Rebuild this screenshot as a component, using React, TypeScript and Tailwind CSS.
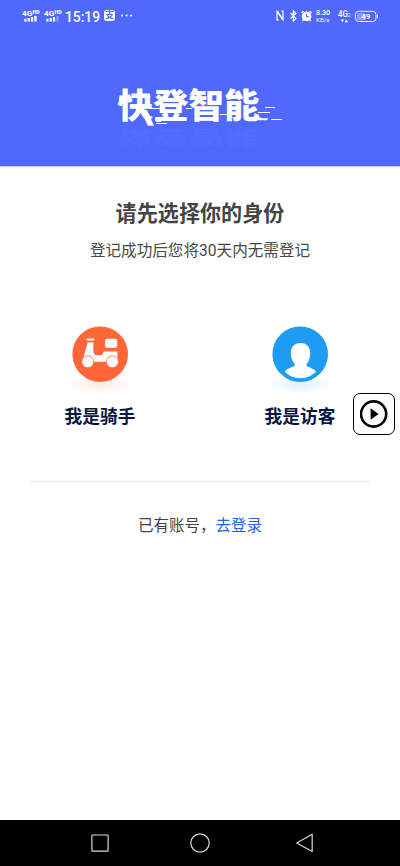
import React from "react";

const SignalIcon: React.FC<{ weak?: boolean }> = ({ weak }) => (
  <svg className="block w-[18px] h-3" viewBox="0 0 18 12" fill="#fff">
    <text x="0" y="5.6" fontSize="7.4" fontWeight="700" textLength="10.3" lengthAdjust="spacingAndGlyphs">
      4G
    </text>
    <text x="10.4" y="4.4" fontSize="5.4" fontWeight="900" textLength="7.2" lengthAdjust="spacingAndGlyphs">
      HD
    </text>
    <rect x="2.3" y="8.8" width="2.2" height="2.8" />
    <rect x="5.6" y="8" width="2.2" height="3.6" />
    <rect x="8.9" y="7" width="2.2" height="4.6" />
    <rect x="12.3" y="6" width="2.3" height="5.6" opacity={weak ? 0.3 : 1} />
  </svg>
);

const StatusBar: React.FC = () => (
  <div className="flex h-[31px] items-center pl-[22px] pr-[21px] font-['Roboto','Noto_Sans_CJK_SC',sans-serif] text-white">
    <SignalIcon />
    <div className="ml-[4px]">
      <SignalIcon weak />
    </div>
    <svg className="ml-[3px] h-5 w-9" viewBox="0 0 36 20" fill="#fff">
      <text x="0" y="15.5" fontSize="14" fontWeight="500" textLength="35" lengthAdjust="spacingAndGlyphs">
        15:19
      </text>
    </svg>
    <span className="ml-[3px] flex h-[11px] w-[11px] items-center justify-center rounded-[3px] bg-white text-[9px] leading-none font-bold text-[#5068fb]">
      支
    </span>
    <svg className="ml-[6px] h-[3px] w-3" viewBox="0 0 12 3" fill="#fff">
      <circle cx="1.1" cy="1.5" r="1" />
      <circle cx="5.6" cy="1.5" r="1" />
      <circle cx="10.1" cy="1.5" r="1" />
    </svg>

    <svg className="ml-auto h-5 w-[104px]" viewBox="0 0 104 20" fill="none" stroke="#fff">
      <path d="M3.6 14.2H2V5.4L7.4 13.4M2.6 5.4L8 13.8V5H6.4" strokeWidth="1.2" />
      <path d="M15.5 7L20.9 12.4L18.3 14.8V4.8L20.9 7.2L15.5 12.6" strokeWidth="1.2" />
      <circle cx="31.6" cy="10.4" r="4.8" fill="#fff" stroke="none" />
      <path d="M26.5 7L28.6 5.2M34.6 5.2L36.7 7M28.6 13.6L27.4 15M34.6 13.6L35.8 15" strokeWidth="1.3" />
      <path d="M31.6 7.6V10.8H34.2" stroke="#5068fb" strokeWidth="1.1" />
      <g fill="#fff" stroke="none">
        <text x="41" y="9.4" fontSize="7" fontWeight="500" textLength="14" lengthAdjust="spacingAndGlyphs">
          8.30
        </text>
        <text x="41" y="15.9" fontSize="6" textLength="13.5" lengthAdjust="spacingAndGlyphs">
          KB/s
        </text>
        <text x="63" y="11.1" fontSize="9" fontWeight="500" textLength="9.8" lengthAdjust="spacingAndGlyphs">
          4G
        </text>
        <text x="72.8" y="11.4" fontSize="4.8">
          2
        </text>
        <path d="M65.8 13.4H69.2L67.5 16.2ZM69.6 16.2H73L71.3 13.4Z" />
        <rect x="82" y="7" width="8.6" height="7.4" rx="1.5" opacity="0.35" />
        <path d="M102 8.4Q103 8.6 103 9.4V11.2Q103 12 102 12.2Z" />
        <text x="86.2" y="12.9" fontSize="7" fontWeight="700" textLength="9" lengthAdjust="spacingAndGlyphs">
          49
        </text>
      </g>
      <rect x="80.4" y="5.3" width="20.6" height="10.2" rx="3.2" strokeWidth="0.9" />
    </svg>
  </div>
);

const Logo: React.FC = () => (
  <svg
    className="block h-20 w-[180px] overflow-visible font-['Noto_Sans_CJK_SC',sans-serif]"
    viewBox="0 0 180 80"
    fill="#fff"
  >
    <g transform="scale(1 .95)">
      <text x="7.5" y="36.2" fontSize="35.5" fontWeight="900" textLength="142" lengthAdjust="spacingAndGlyphs">
        快登智能
      </text>
    </g>
    <g transform="matrix(1 0 0 -.5 0 65)" opacity="0.025" aria-hidden="true">
      <text x="7.5" y="36.5" fontSize="35.5" fontWeight="900" textLength="142" lengthAdjust="spacingAndGlyphs">
        快登智能
      </text>
    </g>
    <path d="M30.5 26H37L44 41.7H38Z" />
    <path d="M138 33H150L151 34.2H158.5L157 36.2H138Z" />
    <path
      d="M40 24.5H50M76 24.5H82M110 30.5H118M46 37.5H51M46 39.5H57M148 28.5H160M155 23.5H165M161 35.5H172"
      stroke="#fff"
      strokeWidth="1"
    />
  </svg>
);

const RiderIcon: React.FC = () => (
  <svg className="block h-[72px] w-[72px]" viewBox="-8 0 72 72">
    <defs>
      <radialGradient id="riderGlow">
        <stop offset="0" stopColor="#ff6836" stopOpacity="0.15" />
        <stop offset="1" stopColor="#ff6836" stopOpacity="0" />
      </radialGradient>
    </defs>
    <ellipse cx="28" cy="58" rx="33" ry="10" fill="url(#riderGlow)" />
    <circle cx="28.2" cy="28.2" r="27.8" fill="#ff6638" />
    <rect x="33" y="12.8" width="12.2" height="9" rx="2" fill="#fff" />
    <rect x="14.6" y="12.6" width="7.8" height="1.9" rx="0.8" fill="#fff" />
    <path
      d="M15.7 16.4H21.5L21.2 24Q21.2 27.6 23.4 29.2H29.3Q31 29 31.6 25.6H45.4V31Q46.5 33 46.5 35.8H10.2Q9.9 33 11.6 30.8Z"
      fill="#fff"
    />
    <g fill="#fff" stroke="#ff6638" strokeWidth="0.8">
      <circle cx="15.8" cy="35.8" r="6" />
      <circle cx="40.4" cy="35.8" r="6" />
    </g>
  </svg>
);

const VisitorIcon: React.FC = () => (
  <svg className="block h-[72px] w-[72px]" viewBox="-8 0 72 72">
    <defs>
      <radialGradient id="visitorGlow">
        <stop offset="0" stopColor="#1e9cf2" stopOpacity="0.15" />
        <stop offset="1" stopColor="#1e9cf2" stopOpacity="0" />
      </radialGradient>
    </defs>
    <ellipse cx="28" cy="58" rx="33" ry="10" fill="url(#visitorGlow)" />
    <circle cx="28.2" cy="28.2" r="27.8" fill="#1e9cf2" />
    <path
      d="M28.5 17C22 17 18.8 21.5 18.8 27.5C18.8 32 20.5 35.7 22.6 38V40.3C19 41.4 15.5 42.6 12.6 45.6C16.5 49.8 22 52.3 28.3 52.3C34.6 52.3 40 49.8 44.2 45.6C41 42.6 38 41.4 34.6 40.3V38C36.5 35.7 38.3 32 38.3 27.5C38.3 21.5 35 17 28.5 17Z"
      fill="#fff"
    />
  </svg>
);

const RoleOption: React.FC<{ label: string; children: React.ReactNode }> = ({
  label,
  children,
}) => (
  <button className="flex flex-1 flex-col items-center" type="button">
    {children}
    <span className="mt-1 text-[17.7px] leading-[26px] font-bold text-[#071642]">
      {label}
    </span>
  </button>
);

const NavigationBar: React.FC = () => (
  <div className="flex h-[46px] items-center justify-between bg-black pr-[86px] pl-[90px]">
    <svg className="h-5 w-5" viewBox="0 0 20 20" fill="none" stroke="#d8d8d8" strokeWidth="1.2">
      <rect x="1.9" y="2" width="16.2" height="16.2" rx="0.6" />
    </svg>
    <svg className="-ml-1 h-5 w-5" viewBox="0 0 20 20" fill="none" stroke="#d8d8d8" strokeWidth="1.2">
      <circle cx="10" cy="10" r="9.2" />
    </svg>
    <svg className="h-5 w-5" viewBox="0 0 20 20" fill="none" stroke="#d8d8d8" strokeWidth="1.2">
      <path d="M18.2 1.2V18.5L2.7 10Z" strokeLinejoin="round" />
    </svg>
  </div>
);

export default function App() {
  return (
    <div className="relative flex h-[866px] w-[400px] flex-col overflow-hidden bg-white font-['Noto_Sans_CJK_SC',sans-serif]">
      <header className="h-[166px] bg-[#5068fb]">
        <StatusBar />
        <div className="flex justify-center pt-[53px]">
          <Logo />
        </div>
      </header>

      <main className="flex flex-1 flex-col border-t border-[#c5ccfd] px-[30px]">
        <h1 className="mt-[30px] text-center text-[21.1px] leading-[31px] font-bold text-[#444]">
          请先选择你的身份
        </h1>
        <p className="mt-[11px] text-center font-['Roboto','Noto_Sans_CJK_SC',sans-serif] text-[15.6px] leading-6 text-[#484848]">
          登记成功后您将30天内无需登记
        </p>

        <div className="-mx-[30px] mt-[63px] flex">
          <RoleOption label="我是骑手">
            <RiderIcon />
          </RoleOption>
          <RoleOption label="我是访客">
            <VisitorIcon />
          </RoleOption>
        </div>

        <div className="mt-[53px] border-t border-[#ececec]" />

        <p className="mt-[30px] text-center text-[15.5px] leading-6 text-[#444]">
          已有账号，
          <a className="text-[#2861df]">去登录</a>
        </p>
      </main>

      <button
        className="absolute top-[393px] right-[5px] flex h-[42px] w-[42px] items-center justify-center rounded-[7px] border border-black bg-white"
        type="button"
      >
        <svg className="h-7 w-7" viewBox="0 0 28 28">
          <circle cx="13.6" cy="14" r="12.6" fill="none" stroke="#000" strokeWidth="2.6" />
          <path d="M10.6 8.2L18.6 14L10.6 19.8Z" />
        </svg>
      </button>

      <NavigationBar />
    </div>
  );
}
